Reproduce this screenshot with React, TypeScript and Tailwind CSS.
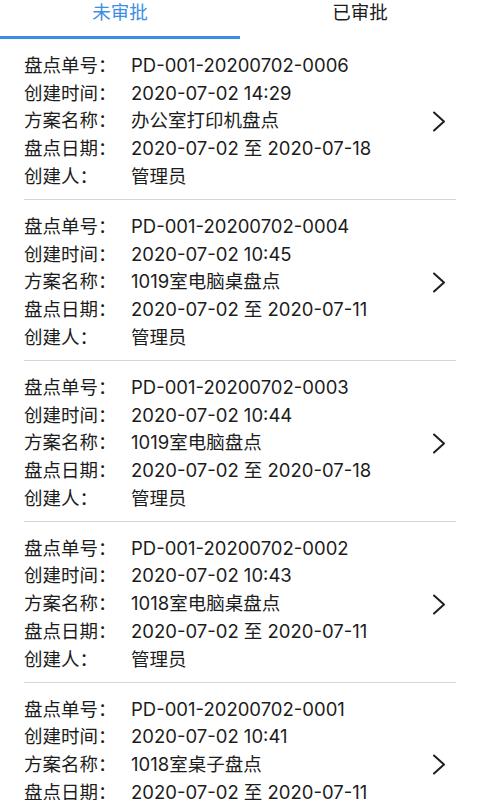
import React from "react";

const records = [
  {
    no: "PD-001-20200702-0006",
    created: "2020-07-02 14:29",
    plan: "办公室打印机盘点",
    range: "2020-07-02 至 2020-07-18",
    owner: "管理员",
  },
  {
    no: "PD-001-20200702-0004",
    created: "2020-07-02 10:45",
    plan: "1019室电脑桌盘点",
    range: "2020-07-02 至 2020-07-11",
    owner: "管理员",
  },
  {
    no: "PD-001-20200702-0003",
    created: "2020-07-02 10:44",
    plan: "1019室电脑盘点",
    range: "2020-07-02 至 2020-07-18",
    owner: "管理员",
  },
  {
    no: "PD-001-20200702-0002",
    created: "2020-07-02 10:43",
    plan: "1018室电脑桌盘点",
    range: "2020-07-02 至 2020-07-11",
    owner: "管理员",
  },
  {
    no: "PD-001-20200702-0001",
    created: "2020-07-02 10:41",
    plan: "1018室桌子盘点",
    range: "2020-07-02 至 2020-07-11",
    owner: "管理员",
  },
];

const Chevron = () => (
  <svg width="14" height="21" viewBox="0 0 14 21" fill="none">
    <polyline
      points="2,1.5 12,10.5 2,19.5"
      stroke="#1f1f1f"
      strokeWidth="2"
      strokeLinecap="round"
      strokeLinejoin="round"
    />
  </svg>
);

const Row = ({ label, value }: { label: string; value: string }) => (
  <div className="flex h-[27.7px] items-center">
    <span className="w-[107px] shrink-0">{label}</span>
    <span>{value}</span>
  </div>
);

export default function App() {
  return (
    <div
      className="bg-white text-[18.5px] text-[#1c1c1c]"
      style={{ fontFamily: 'Inter, "Noto Sans CJK SC", sans-serif' }}
    >
      <div className="flex">
        <div className="flex h-[39px] flex-1 flex-col justify-between">
          <span className="text-center leading-[24px] text-[#3a8ee6]">未审批</span>
          <div className="h-[3px] w-full bg-[#3a8ee6]" />
        </div>
        <div className="flex h-[39px] flex-1 flex-col">
          <span className="text-center leading-[24px]">已审批</span>
        </div>
      </div>

      <div className="px-6">
        {records.map((r) => (
          <div
            key={r.no}
            className="flex items-center border-b border-[#d6d6d6] pt-[13px] pb-[8.5px] pr-[10px]"
          >
            <div className="flex-1">
              <Row label="盘点单号：" value={r.no} />
              <Row label="创建时间：" value={r.created} />
              <Row label="方案名称：" value={r.plan} />
              <Row label="盘点日期：" value={r.range} />
              <Row label="创建人：" value={r.owner} />
            </div>
            <Chevron />
          </div>
        ))}
      </div>
    </div>
  );
}
